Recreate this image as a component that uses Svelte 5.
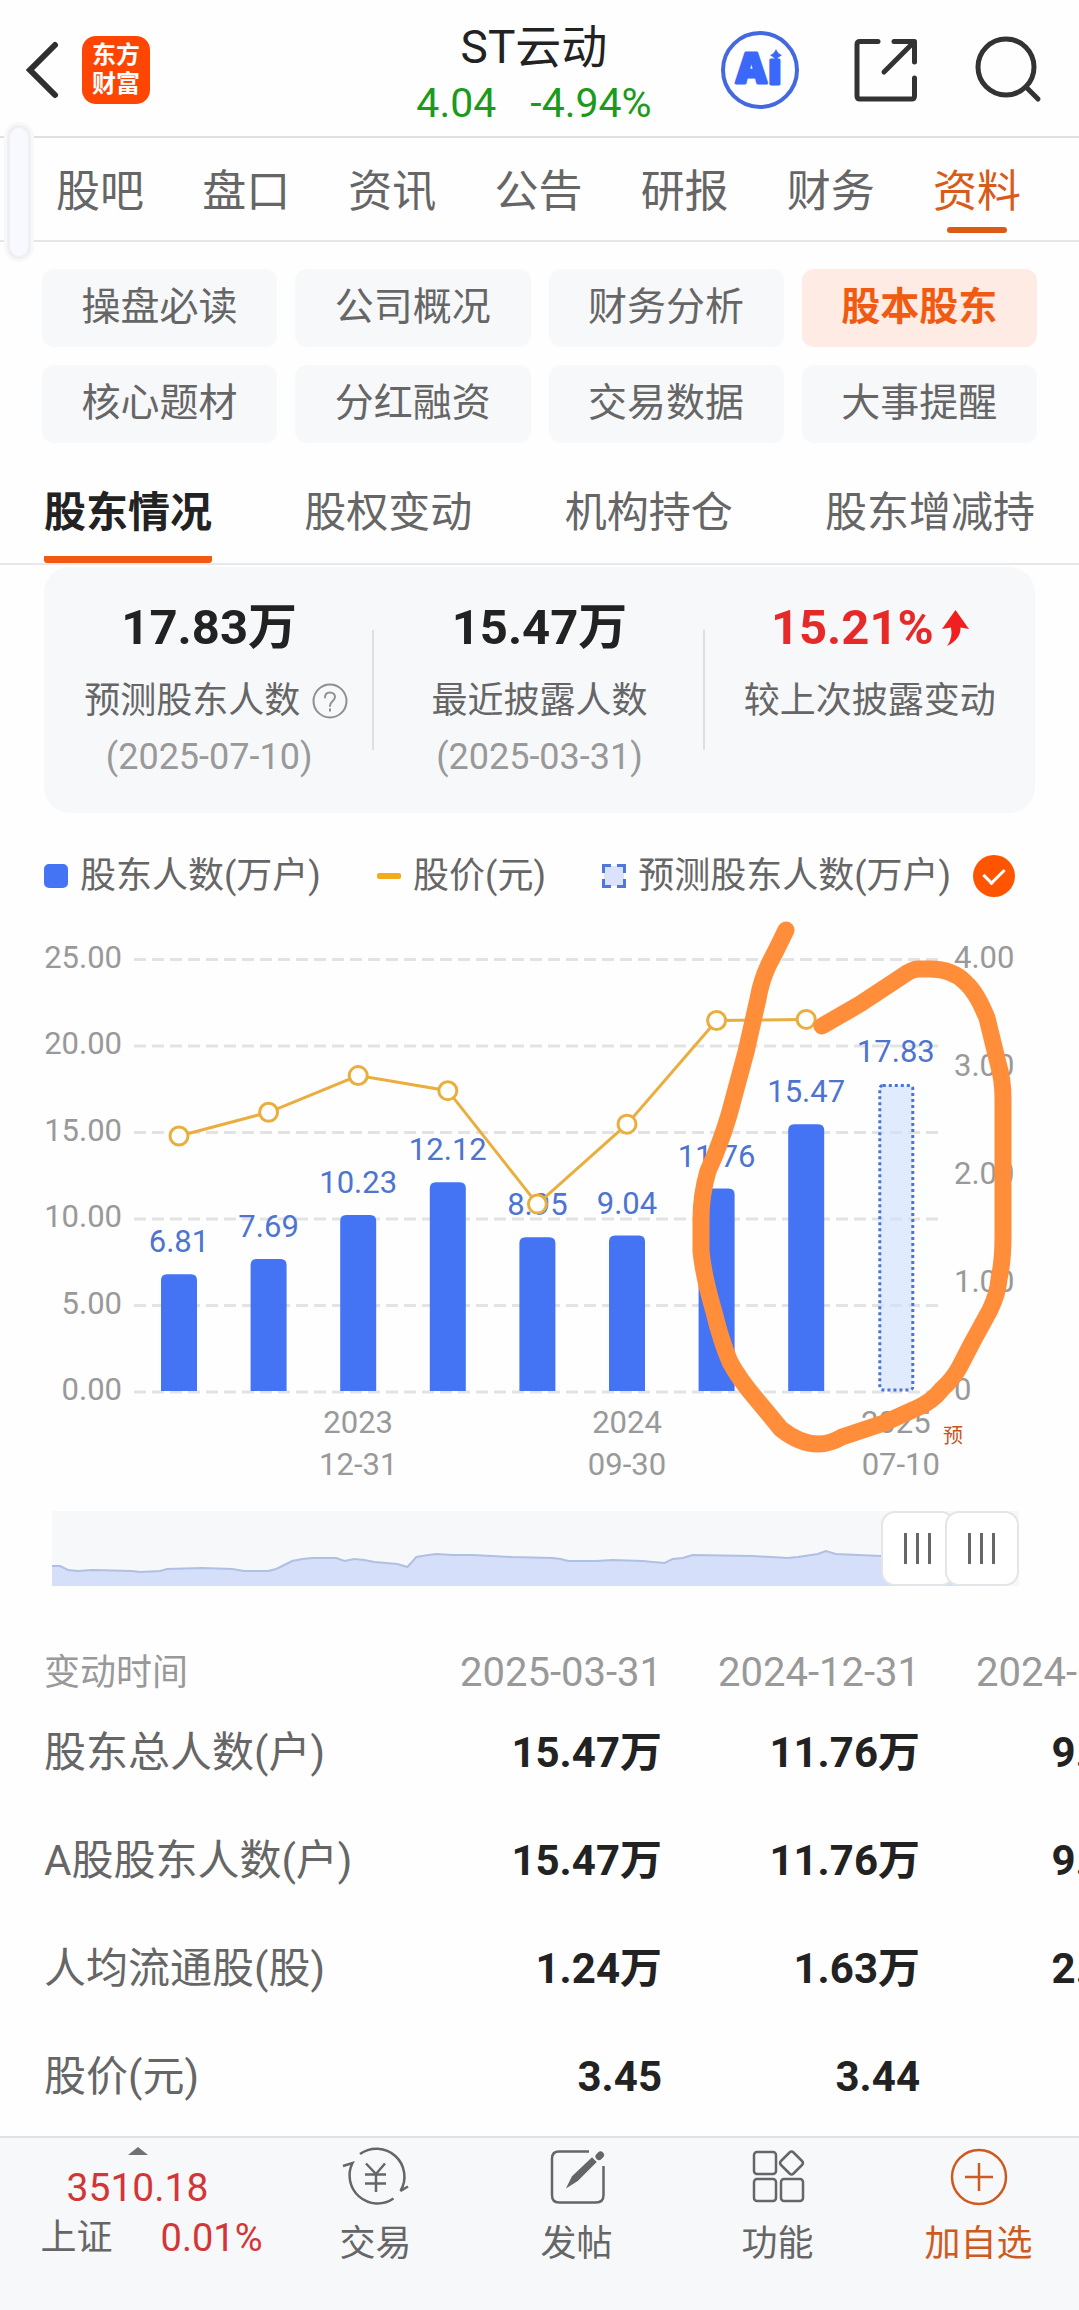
<script>
  const mainTabs = ['股吧', '盘口', '资讯', '公告', '研报', '财务', '资料'];
  const chips = ['操盘必读', '公司概况', '财务分析', '股本股东', '核心题材', '分红融资', '交易数据', '大事提醒'];
  const subTabs = ['股东情况', '股权变动', '机构持仓', '股东增减持'];

  let mainTab = $state('资料');
  let chip = $state('股本股东');
  let subTab = $state('股东情况');
  let showForecast = $state(true);
  let rangeFrom = $state(92.8);
  let rangeTo = $state(100);

  // Chart geometry, in viewBox units
  const base = 473;
  const unit = 17.3;
  const firstX = 179;
  const stepX = 89.6;

  const holders = [6.81, 7.69, 10.23, 12.12, 8.95, 9.04, 11.76, 15.47];
  const forecast = 17.83;
  const prices = [2.37, 2.59, 2.93, 2.79, 1.74, 2.48, 3.44, 3.45];

  const xAt = (i) => firstX + i * stepX;
  const yAt = (v) => base - v * unit;
  const priceY = (p) => base - p * 108;
  const barPath = (i, v) => {
    const x = xAt(i) - 18;
    const y = yAt(v);
    return `M${x} ${base - 1}V${y + 6}q0 -6 6 -6h24q6 0 6 6V${base - 1}z`;
  };

  const leftTicks = [25, 20, 15, 10, 5, 0];
  const rightTicks = ['4.00', '3.00', '2.00', '1.00', '0'];
  const dates = [
    { i: 2, year: '2023', day: '12-31' },
    { i: 5, year: '2024', day: '09-30' },
    { i: 8, year: '2025', day: '07-10' }
  ];
  const pricePoints = prices.map((p, i) => `${xAt(i)},${priceY(p)}`).join(' ');

  const columns = ['2025-03-31', '2024-12-31', '2024-09-30'];
  const rows = [
    { name: '股东总人数(户)', values: ['15.47万', '11.76万', '9.04万'] },
    { name: 'A股股东人数(户)', values: ['15.47万', '11.76万', '9.04万'] },
    { name: '人均流通股(股)', values: ['1.24万', '1.63万', '2.12万'] },
    { name: '股价(元)', values: ['3.45', '3.44', '2.48'] }
  ];
</script>

<div class="page">
  <header>
    <div class="left">
      <button class="icon" aria-label="返回">
        <svg width="40" height="68" viewBox="0 0 40 68" fill="none" stroke="#2e2f31" stroke-width="6" stroke-linecap="round"><path d="M31 9 6 34 31 59" /></svg>
      </button>
      <a class="logo" href="#home">东方<br />财富</a>
    </div>
    <div class="stock">
      <h1>ST云动</h1>
      <p><span>4.04</span><span>-4.94%</span></p>
    </div>
    <div class="actions">
      <button class="icon" aria-label="AI">
        <svg width="80" height="80" viewBox="0 0 80 80">
          <circle cx="40" cy="40" r="37" fill="none" stroke="#4468e0" stroke-width="4" />
          <g fill="#3a68fb" stroke="#3a68fb" stroke-width="3" stroke-linejoin="round" class="ai">
            <text x="16" y="53">A</text>
            <text x="48" y="54">ı</text>
          </g>
          <path d="M56 19q2 5 6 6-4 2-6 6-2-4-6-6 4-1 6-6z" fill="#3a68fb" />
        </svg>
      </button>
      <button class="icon" aria-label="分享">
        <svg width="72" height="72" viewBox="0 0 72 72" fill="none" stroke="#333" stroke-width="5" stroke-linecap="round" stroke-linejoin="round"><path d="M28 7.500H10q-3 0-3 3V62q0 3 3 3H61.500q3 0 3-3V44M44 7.500H64.500V28M64 8 34 38" /></svg>
      </button>
      <button class="icon" aria-label="搜索">
        <svg width="72" height="72" viewBox="0 0 72 72" fill="none" stroke="#333" stroke-width="5" stroke-linecap="round"><circle cx="34" cy="33" r="28" /><path d="M54 53 66 65" /></svg>
      </button>
    </div>
  </header>

  <nav class="main-tabs">
    {#each mainTabs as t}
      <button class:on={mainTab === t} onclick={() => (mainTab = t)}>{t}</button>
    {/each}
    <span class="edge-handle"></span>
  </nav>

  <nav class="chips">
    {#each chips as c}
      <button class:on={chip === c} onclick={() => (chip = c)}>{c}</button>
    {/each}
  </nav>

  <nav class="sub-tabs">
    {#each subTabs as t}
      <button class:on={subTab === t} onclick={() => (subTab = t)}>{t}</button>
    {/each}
  </nav>

  <section class="summary">
    <div class="cell">
      <strong>17.83万</strong>
      <span class="label with-help">预测股东人数
        <button class="icon" aria-label="说明">
          <svg width="36" height="36" viewBox="0 0 36 36" fill="none" stroke="#8f8f8f" stroke-width="2"><circle cx="18" cy="18" r="16.500" /><path d="M13 14.500c0-3 2-5 5-5s5 2 5 4.500c0 4-5 4-5 9" stroke-linecap="round" /><path d="M18 25.500v3" /></svg>
        </button>
      </span>
      <span class="date">(2025-07-10)</span>
    </div>
    <div class="cell">
      <strong>15.47万</strong>
      <span class="label">最近披露人数</span>
      <span class="date">(2025-03-31)</span>
    </div>
    <div class="cell">
      <strong class="up">15.21%<svg width="27" height="36" viewBox="0 0 27 36" fill="#f02020"><path d="M13.500 0 27 19 18.500 17.500Q19 29 5 36 11 28 9 17.500L0 19z" /></svg></strong>
      <span class="label">较上次披露变动</span>
    </div>
  </section>

  <div class="legend">
    <span class="key"><i class="bar"></i>股东人数(万户)</span>
    <span class="key"><i class="line"></i>股价(元)</span>
    <label class="key">
      <svg width="24" height="24" viewBox="0 0 24 24"><rect x="2" y="2" width="20" height="20" fill="#dbe3fc" /><path d="M1.500 9V1.500H9M15 1.500H22.500V9M22.500 15V22.500H15M9 22.500H1.500V15" fill="none" stroke="#5078dc" stroke-width="3" /></svg>
      预测股东人数(万户)
      <input type="checkbox" bind:checked={showForecast} />
    </label>
  </div>

  <svg class="chart" viewBox="0 0 1079 570" role="img" aria-label="股东人数与股价">
    <g stroke="#e3e3e4" stroke-width="3" stroke-dasharray="12 6">
      {#each leftTicks as t}
        <line x1="134" x2="939" y1={yAt(t)} y2={yAt(t)} />
      {/each}
    </g>
    <g class="axis" text-anchor="end">
      {#each leftTicks as t}
        <text x="122" y={yAt(t) + 8}>{t.toFixed(2)}</text>
      {/each}
    </g>
    <g class="axis">
      {#each rightTicks as t, i}
        <text x="954" y={49 + i * 108}>{t}</text>
      {/each}
    </g>
    <g class="axis" text-anchor="middle">
      {#each dates as d}
        <text x={xAt(d.i)} y="514">{d.year}</text>
        <text x={xAt(d.i) + (d.i === 8 ? 5 : 0)} y="556">{d.day}</text>
      {/each}
    </g>
    <text class="mark" x="943" y="524">预</text>
    <g fill="#4473f4">
      {#each holders as v, i}
        <path d={barPath(i, v)} />
      {/each}
    </g>
    {#if showForecast}
      <rect x={xAt(8) - 16} y={yAt(forecast) + 2} width="33" height={forecast * unit - 4} rx="3" fill="#cfe0fc" fill-opacity="0.65" stroke="#4a74d6" stroke-width="3" stroke-dasharray="3 3" />
      <text class="value" x={xAt(8)} y={yAt(forecast) - 22}>{forecast}</text>
    {/if}
    {#each holders as v, i}
      <text class="value" x={xAt(i)} y={yAt(v) - 22}>{v.toFixed(2)}</text>
    {/each}
    <g stroke="#eaae3e" stroke-width="3">
      <polyline points={pricePoints} fill="none" />
      {#each prices as p, i}
        <circle cx={xAt(i)} cy={priceY(p)} r="9" fill="#fff" />
      {/each}
    </g>
    <path
      d="M786 11Q776 32 769 45 761 62 758 80L746 133 729 196Q720 226 708 252 701 276 701 300V332Q703 355 714 393 721 422 730 443 739 460 757 481L781 510Q800 525 818 525 830 525 842 518L884 504 915 490Q932 483 942 470 953 460 959 449L973 422 990 391Q998 374 999 360 1003 342 1003 318V180Q1003 160 998 144L987 99Q977 74 966 64 953 50 930 50H918Q912 50 901 58L860 85 822 107"
      fill="none" stroke="#ff8d3a" stroke-width="17" stroke-linecap="round" stroke-linejoin="round" />
  </svg>

  <div class="zoomer">
    <svg viewBox="0 0 966 75" preserveAspectRatio="none" aria-hidden="true">
      <path d="M0 75V55H8L16 59 26 60 40 59 80 60 88 61 108 60 115 58 150 57 180 58 192 60 216 60 224 58 232 54 240 50 250 48 260 47 284 47 292 50 302 48 312 49 322 51 345 53 355 56 364 46 376 44 384 43 400 44 420 44 460 46 500 47 508 48 516 50 544 50 560 49 590 50 600 51 612 52 620 48 630 47 640 44 700 45 735 47 745 46 765 43 773 40 783 43 828 45 940 45V75z" fill="#d6dffa" />
      <path d="M0 55H8L16 59 26 60 40 59 80 60 88 61 108 60 115 58 150 57 180 58 192 60 216 60 224 58 232 54 240 50 250 48 260 47 284 47 292 50 302 48 312 49 322 51 345 53 355 56 364 46 376 44 384 43 400 44 420 44 460 46 500 47 508 48 516 50 544 50 560 49 590 50 600 51 612 52 620 48 630 47 640 44 700 45 735 47 745 46 765 43 773 40 783 43 828 45 940 45" fill="none" stroke="#afc0e2" stroke-width="2" />
    </svg>
    <input type="range" step="0.1" aria-label="起始日期" bind:value={rangeFrom} />
    <input type="range" step="0.1" aria-label="结束日期" bind:value={rangeTo} />
  </div>

  <div class="scroller">
    <table>
      <thead>
        <tr><th scope="col">变动时间</th>{#each columns as c}<th scope="col">{c}</th>{/each}</tr>
      </thead>
      <tbody>
        {#each rows as r}
          <tr><th scope="row">{r.name}</th>{#each r.values as v}<td>{v}</td>{/each}</tr>
        {/each}
      </tbody>
    </table>
  </div>

  <footer>
    <button class="index">
      <svg width="20" height="8" viewBox="0 0 20 8"><path d="M10 0 20 8H0z" fill="#707174" /></svg>
      <span class="points">3510.18</span>
      <span class="change"><span>上证</span><span class="rate">0.01%</span></span>
    </button>
    <button class="tool">
      <svg viewBox="0 0 64 64"><path d="M16 9A28 28 0 0 1 56.500 46L64 41.500M-1 21 8.500 18A28 28 0 0 0 49.500 53.500M22 18.500 32 29 41 18.500M32 29V47M21 29.500H42M21 38.500H42" /></svg>
      交易
    </button>
    <button class="tool">
      <svg viewBox="0 0 64 64"><path d="M44 6.500H14q-7 0-7 7V50q0 7.500 7 7.500H51q7.500 0 7.500-7.500V21" /><path d="M24 40 28 32 47 14 50 17 32 35z" fill="#666" /><path d="M54 11.500 55.500 10" stroke-width="7" stroke-linecap="round" /></svg>
      发帖
    </button>
    <button class="tool">
      <svg viewBox="0 0 64 64"><rect x="8" y="7" width="22" height="22" rx="3" /><rect x="8" y="34" width="22" height="22" rx="3" /><rect x="35" y="34" width="22" height="22" rx="3" /><path d="M43.500 7.500q2-2 4 0l8.500 8.500q2 2 0 4l-8.500 8.500q-2 2-4 0L35 20q-2-2 0-4z" /></svg>
      功能
    </button>
    <button class="tool add">
      <svg viewBox="0 0 64 64"><circle cx="32" cy="32" r="27" /><path d="M18 32H46M32 18V46" /></svg>
      加自选
    </button>
  </footer>
</div>

<style>
  :global(body) {
    margin: 0;
    background: #fefefe;
  }
  .page {
    display: flex;
    flex-direction: column;
    min-height: 100vh;
    overflow: hidden;
    font-family: Roboto, 'Noto Sans CJK SC', sans-serif;
    color: #666;
  }
  button {
    padding: 0;
    border: 0;
    background: none;
    font: inherit;
    color: inherit;
    cursor: pointer;
  }
  svg {
    display: block;
    flex: none;
    overflow: visible;
  }
  .icon {
    display: flex;
  }

  header {
    display: grid;
    grid-template-columns: 1fr auto 1fr;
    align-items: center;
    box-sizing: border-box;
    height: 138px;
    padding: 4px 35px 0 24px;
    border-bottom: 2px solid #e0e0e1;
  }
  .left {
    display: flex;
    align-items: center;
    gap: 18px;
  }
  .logo {
    width: 68px;
    padding: 5px 0;
    border-radius: 14px;
    background: #fe4501;
    color: #fff;
    font-size: 24px;
    font-weight: 700;
    line-height: 29px;
    text-align: center;
    text-decoration: none;
  }
  .stock {
    padding-top: 10px;
    text-align: center;
  }
  h1 {
    margin: 0;
    font-size: 46px;
    font-weight: 400;
    line-height: 56px;
    color: #222;
  }
  .stock p {
    display: flex;
    justify-content: center;
    gap: 34px;
    margin: 0;
    font-size: 41px;
    line-height: 56px;
    color: #1b9a1b;
  }
  .actions {
    display: flex;
    justify-content: flex-end;
    align-items: center;
    gap: 50px;
  }
  .ai {
    font: 800 42px 'Open Sans', sans-serif;
  }

  .main-tabs {
    position: relative;
    display: flex;
    justify-content: space-between;
    box-sizing: border-box;
    height: 104px;
    padding: 0 58px 0 56px;
    border-bottom: 2px solid #e6e6e7;
    font-size: 44px;
  }
  .main-tabs button {
    display: flex;
    flex-direction: column;
    align-items: center;
    line-height: 90px;
    padding-top: 9px;
  }
  .main-tabs .on {
    color: #d95b1a;
  }
  .main-tabs .on::after {
    content: '';
    width: 60px;
    height: 6px;
    margin-top: -10px;
    border-radius: 3px;
    background: #dc5a14;
  }
  .edge-handle {
    position: absolute;
    left: 10px;
    top: -10px;
    width: 18px;
    height: 128px;
    border-radius: 9px;
    background: #f7f9ff;
    box-shadow: 0 0 0 3px #f0f0f4, 0 0 0 6px #f8f8f9;
  }

  .chips {
    display: grid;
    grid-template-columns: repeat(4, 1fr);
    gap: 18px;
    padding: 27px 42px 0;
  }
  .chips button {
    height: 78px;
    padding-bottom: 2px;
    border-radius: 12px;
    background: #f7f8fa;
    font-size: 39px;
    line-height: 56px;
  }
  .chips .on {
    background: #feece4;
    color: #f05a12;
    font-weight: 700;
  }

  .sub-tabs {
    display: flex;
    justify-content: space-between;
    box-sizing: border-box;
    height: 122px;
    padding: 0 44px;
    border-bottom: 2px solid #e8e8e9;
    font-size: 42px;
  }
  .sub-tabs button {
    box-sizing: border-box;
    padding-top: 26px;
    border-bottom: 7px solid transparent;
    border-radius: 3px;
    line-height: 86px;
  }
  .sub-tabs .on {
    border-color: #f05a12;
    color: #222;
    font-weight: 700;
  }

  .summary {
    display: grid;
    grid-template-columns: repeat(3, 1fr);
    margin: 2px 44px 0;
    padding: 30px 0 34px;
    border-radius: 26px;
    background: #f7f8fa;
  }
  .cell {
    display: flex;
    flex-direction: column;
    align-items: center;
    height: 182px;
    background: linear-gradient(#dedfe1, #dedfe1) right 33px / 2px 120px no-repeat;
  }
  .cell:last-child {
    background: none;
  }
  .cell strong {
    display: flex;
    align-items: center;
    gap: 8px;
    font-size: 49px;
    line-height: 62px;
    color: #222;
  }
  .cell .up {
    color: #e62a2a;
  }
  .label {
    display: flex;
    align-items: center;
    gap: 12px;
    margin-top: 12px;
    font-size: 36px;
    line-height: 60px;
  }
  .with-help {
    padding-left: 14px;
  }
  .date {
    font-size: 36px;
    line-height: 52px;
    color: #999;
  }

  .legend {
    display: flex;
    justify-content: space-between;
    margin-top: 42px;
    padding: 0 64px 0 44px;
    font-size: 36px;
    line-height: 42px;
  }
  .key {
    display: flex;
    align-items: center;
    gap: 12px;
  }
  .bar {
    width: 24px;
    height: 24px;
    border-radius: 5px;
    background: #4473f4;
  }
  .line {
    width: 24px;
    height: 6px;
    border-radius: 2px;
    background: #f5ab1c;
  }
  .legend input {
    appearance: none;
    width: 42px;
    height: 42px;
    margin: 0 0 0 10px;
    border-radius: 50%;
    background: #d5d5d8;
    display: grid;
    place-items: center;
  }
  .legend input:checked {
    background: #ff5500;
  }
  .legend input:checked::after {
    content: '';
    width: 17px;
    height: 10px;
    margin-bottom: 6px;
    border: solid #fff;
    border-width: 0 0 3px 3px;
    rotate: -45deg;
  }

  .chart {
    width: 100%;
    margin-top: 22px;
  }
  .axis {
    font-size: 31px;
    fill: #999;
  }
  .value {
    font-size: 31px;
    fill: #4d74cf;
    text-anchor: middle;
  }
  .mark {
    font-size: 20px;
    fill: #cb541c;
  }

  .zoomer {
    display: grid;
    height: 75px;
    margin: 22px 60px 0 52px;
    background: #f7f8fa;
  }
  .zoomer > * {
    grid-area: 1 / 1;
    width: 100%;
    height: 75px;
  }
  .zoomer input {
    appearance: none;
    margin: 0;
    background: none;
    pointer-events: none;
  }
  .zoomer input::-webkit-slider-thumb {
    appearance: none;
    box-sizing: border-box;
    width: 74px;
    height: 75px;
    border: 2px solid #e4e5e9;
    border-radius: 14px;
    background:
      linear-gradient(#666, #666) 21px 20px / 3px 31px no-repeat,
      linear-gradient(#666, #666) 33px 20px / 3px 31px no-repeat,
      linear-gradient(#666, #666) 45px 20px / 3px 31px no-repeat,
      #fff;
    pointer-events: auto;
  }

  .scroller {
    margin-top: 61px;
    overflow-x: auto;
    scrollbar-width: none;
  }
  table {
    width: 1178px;
    table-layout: fixed;
    border-collapse: collapse;
  }
  th,
  td {
    height: 108px;
    padding: 0;
    font-size: 42px;
    line-height: 52px;
    text-align: right;
    white-space: nowrap;
  }
  th {
    font-weight: 400;
  }
  th:first-child {
    width: 360px;
    padding-left: 44px;
    text-align: left;
  }
  thead th {
    height: 52px;
    font-size: 40px;
    color: #999;
  }
  thead th:first-child {
    font-size: 36px;
  }
  td {
    color: #222;
    font-weight: 700;
  }

  footer {
    display: grid;
    grid-template-columns: 275fr 201fr 201fr 201fr 201fr;
    box-sizing: border-box;
    height: 174px;
    margin-top: auto;
    border-top: 2px solid #dfe1e3;
    background: #f7f8fa;
  }
  footer button {
    display: flex;
    flex-direction: column;
    align-items: center;
  }
  .index {
    padding-top: 9px;
  }
  .points {
    margin-top: 8px;
    font-size: 39px;
    line-height: 50px;
    color: #d23636;
  }
  .change {
    display: flex;
    gap: 48px;
    padding-left: 28px;
    font-size: 36px;
    line-height: 50px;
  }
  .rate {
    font-size: 38px;
    color: #d23636;
  }
  .tool {
    padding-top: 7px;
    font-size: 36px;
    line-height: 70px;
  }
  .tool svg {
    width: 64px;
    height: 64px;
    fill: none;
    stroke: #666;
    stroke-width: 2.5;
  }
  .tool.add {
    color: #cf5a20;
  }
  .tool.add svg {
    stroke: #cf5a20;
  }
</style>
